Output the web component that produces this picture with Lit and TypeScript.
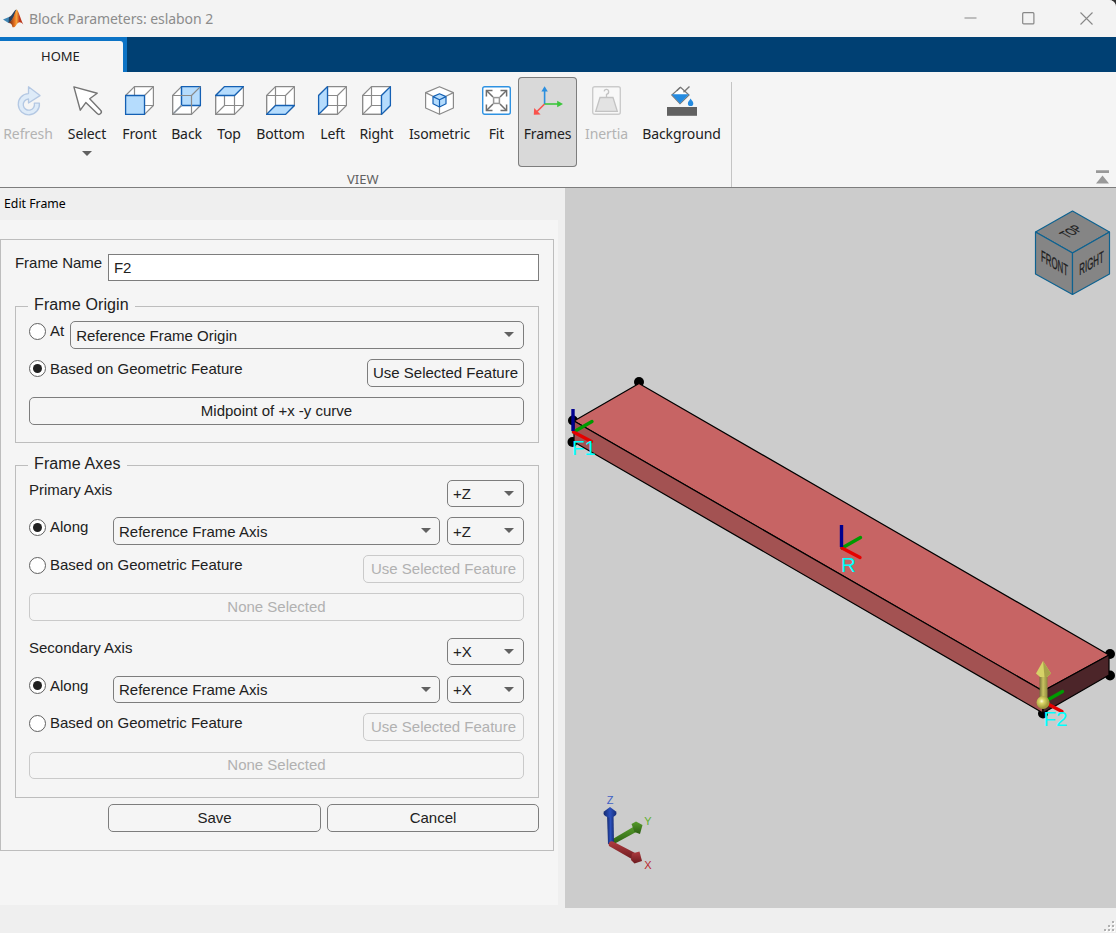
import { LitElement, html, svg, css, nothing } from "lit";
import { customElement, property } from "lit/decorators.js";
import { classMap } from "lit/directives/class-map.js";
import { styleMap } from "lit/directives/style-map.js";

const GRAY = "#8a8a8a";
const BLUE = "#1460b4";
const FILL = "#b5dcfd";

/* Wireframe cube with one highlighted face. */
const cube = (face: string, inFront = true) => {
  const hi = svg`<polygon points=${face} fill=${FILL} stroke=${BLUE} stroke-width="1.3"/>`;
  return svg`
    <g fill="none" stroke=${GRAY} stroke-width="1.2" stroke-linejoin="round">
      <polygon points="0.6,9.5 9.5,0.6 28.4,0.6 28.4,19.5 19.5,28.4 0.6,28.4" fill="#fff"/>
      ${inFront ? nothing : hi}
      <path d="M9.5 0.6V19.5H28.4M9.5 19.5L0.6 28.4" stroke=${inFront ? GRAY : BLUE}/>
      ${inFront ? nothing : svg`<path d="M9.5 19.5L0.6 28.4" stroke="#f5f5f5"/><path d="M9.5 19.5L0.6 28.4"/>`}
      <path d="M0.6 9.5H19.5V28.4M19.5 9.5L28.4 0.6M0.6 9.5V28.4H19.5"/>
      ${inFront ? hi : nothing}
    </g>`;
};

const icons: Record<string, unknown> = {
  refresh: svg`<path d="M14.5 7.6A10.6 10.6 0 1 0 25.4 17.2H20.3A5.6 5.6 0 1 1 14.5 13V17L26 9.6 14.5 0.8Z" fill="#deebf8" stroke="#b4c8e3" stroke-width="1.3" stroke-linejoin="round"/>`,
  select: svg`<path d="M0.9 0.9L24.2 7.2 16.7 12.7 27.6 24.2A2.3 2.3 0 0 1 24.2 27.6L12.8 16.6 7.3 24.2Z" fill="#fff" stroke="#757575" stroke-width="1.4" stroke-linejoin="round"/>`,
  front: cube("0.6,9.5 19.5,9.5 19.5,28.4 0.6,28.4"),
  back: cube("9.5,0.6 28.4,0.6 28.4,19.5 9.5,19.5", false),
  top: cube("0.6,9.5 9.5,0.6 28.4,0.6 19.5,9.5"),
  bottom: cube("0.6,28.4 9.5,19.5 28.4,19.5 19.5,28.4"),
  left: cube("0.6,9.5 9.5,0.6 9.5,19.5 0.6,28.4"),
  right: cube("19.5,9.5 28.4,0.6 28.4,19.5 19.5,28.4"),
  isometric: svg`<g fill="none" stroke-linejoin="round">
      <path d="M14.5 0.7L28.4 6.6V22L14.5 28.3 0.6 22V6.6Z" fill="#fff" stroke=${GRAY} stroke-width="1.2"/>
      <path d="M0.6 6.6L8 10.3M28.4 6.6L21 10.3M14.5 21V28.3" stroke=${GRAY} stroke-width="1.2"/>
      <path d="M14.5 7.8L21 10.6V17.8L14.5 21 8 17.8V10.6Z" fill=${FILL} stroke=${BLUE} stroke-width="1.2"/>
      <path d="M8 10.6L14.5 13.8 21 10.6M14.5 13.8V21" stroke=${BLUE} stroke-width="1.2"/></g>`,
  fit: svg`<rect x="0.7" y="0.7" width="27.6" height="27.6" rx="2" fill="#fff" stroke="#2e92e2" stroke-width="1.4"/>
    <g fill="none" stroke="#6e6e6e" stroke-width="1.5"><rect x="11.6" y="11.6" width="5.8" height="5.8" stroke="#999"/>
    <path d="M11 11L4.5 4.5M18 11L24.5 4.5M11 18L4.5 24.5M18 18L24.5 24.5"/>
    <path d="M4.4 10.5V4.4H10.5M18.5 4.4H24.6V10.5M4.4 18.5V24.6H10.5M18.5 24.6H24.6V18.5"/></g>`,
  frames: svg`<g fill="none" stroke-width="1.6"><path d="M11.6 18L4 25.5" stroke="#f9524c"/><path d="M11.6 18V5" stroke="#2c8fdf"/><path d="M11.6 18H25" stroke="#3cc63c"/></g>
    <path d="M11.6 0.3L14.8 5.6H8.4Z" fill="#2c8fdf"/><path d="M30 18L24.2 14.8V21.2Z" fill="#3cc63c"/><path d="M0.8 28.8L1.2 22 7.6 28.4Z" fill="#f9524c"/>`,
  inertia: svg`<rect x="0.7" y="0.7" width="27.6" height="27.6" rx="2" fill="#f8f8f8" stroke="#cbcbcb" stroke-width="1.4"/>
    <path d="M8 11.5H21L25.3 25.3H3.7Z" fill="#e3e3e3" stroke="#c3c3c3" stroke-width="1.3"/>
    <path d="M14.5 11V8.4C16.600 7.800 16.900 6.600 16.600 5A2.3 2.3 0 0 0 12.100 5.400" fill="none" stroke="#c3c3c3" stroke-width="1.3"/>`,
  background: svg`<rect x="0" y="21" width="30" height="8.8" fill="#616161"/>
    <path d="M13.5 1.3L22 9 13 17.6 4.8 9Z" fill="#fff" stroke="#777" stroke-width="1.2"/>
    <path d="M4.6 8.2H22L13 17.6Z" fill="#258be0"/>
    <path d="M9.8 4.8L13 1.5M16.5 6.300L22.500 0.4" fill="none" stroke="#777" stroke-width="1.4"/>
    <path d="M23.6 12.6C25.300 15.2 26.300 16 26.300 17.4A2.7 2.7 0 0 1 20.9 17.4C20.900 16 22 15.2 23.6 12.6Z" fill="#258be0"/>`,
};

interface Tool { id: string; label: string; width: number; disabled?: boolean; active?: boolean; menu?: boolean; }

const tools: Tool[] = [
  { id: "refresh", label: "Refresh", width: 56, disabled: true },
  { id: "select", label: "Select", width: 62, menu: true },
  { id: "front", label: "Front", width: 43 },
  { id: "back", label: "Back", width: 51 },
  { id: "top", label: "Top", width: 34 },
  { id: "bottom", label: "Bottom", width: 69 },
  { id: "left", label: "Left", width: 35 },
  { id: "right", label: "Right", width: 53 },
  { id: "isometric", label: "Isometric", width: 73 },
  { id: "fit", label: "Fit", width: 41 },
  { id: "frames", label: "Frames", width: 59, active: true },
  { id: "inertia", label: "Inertia", width: 59, disabled: true },
  { id: "background", label: "Background", width: 91 },
];

@customElement("tool-ribbon")
export class ToolRibbon extends LitElement {
  static styles = css`
    :host { display: block; height: 116px; box-sizing: border-box; background: #f5f5f5; border-bottom: 1px solid #7d7d7d; }
    .row { display: flex; height: 115px; }
    .group { width: 731px; display: flex; flex-direction: column; }
    .divider { width: 1px; margin-top: 10px; background: #c4c4c4; }
    .tools { display: flex; padding-top: 5px; }
    .tool { box-sizing: border-box; height: 90px; padding-top: 9px; display: flex; flex-direction: column; align-items: center; border-radius: 4px; font: 14px/20px "Noto Sans", sans-serif; color: #212121; }
    .tool.active { margin-left: 1px; background: #d9d9d9; box-shadow: inset 0 0 0 1px #7d7d7d; }
    .tool.disabled { color: #b3b3b3; }
    .icon { width: 29px; height: 29px; overflow: visible; flex: none; }
    .label { margin-top: 9px; white-space: nowrap; letter-spacing: -0.1px; }
    .caret { margin-top: 7px; border: 5px solid transparent; border-top-color: #616161; border-bottom: 0; }
    .name { padding-left: 347px; margin-top: 2px; font: 13px/20px "Noto Sans", sans-serif; color: #616161; }
    .end { flex: 1; display: flex; justify-content: flex-end; align-items: flex-end; padding: 0 7px 3px 0; }
  `;
  render() {
    return html`<div class="row">
      <div class="group">
        <div class="tools">
          ${tools.map((t) => html`<div class=${classMap({ tool: true, active: !!t.active, disabled: !!t.disabled })} style=${styleMap({ width: `${t.width}px` })}>
            <svg class="icon" viewBox="0 0 29 29">${icons[t.id]}</svg>
            <span class="label">${t.label}</span>
            ${t.menu ? html`<span class="caret"></span>` : nothing}
          </div>`)}
        </div>
        <div class="name">VIEW</div>
      </div>
      <div class="divider"></div>
      <div class="end"><svg width="13" height="14" viewBox="0 0 13 14"><path d="M0 0.3H13V3H0Z M6.5 5.5L13 13.4H0Z" fill="#999"/></svg></div>
    </div>`;
  }
}

@customElement("radio-option")
export class RadioOption extends LitElement {
  @property({ type: Boolean }) checked = false;
  @property({ type: Boolean }) low = false;
  @property() label = "";
  static styles = css`
    :host { display: flex; align-items: center; height: 19px; gap: 4px; white-space: nowrap; }
    .ring { width: 17px; height: 17px; box-sizing: border-box; border: 1px solid #616161; border-radius: 50%; background: #fff; display: flex; align-items: center; justify-content: center; }
    .low { margin-top: 2px; }
    .dot { width: 9px; height: 9px; border-radius: 50%; background: #212121; }
  `;
  render() {
    return html`<span class=${classMap({ ring: true, low: this.low })}>${this.checked ? html`<span class="dot"></span>` : nothing}</span><span>${this.label}</span>`;
  }
}

@customElement("drop-down")
export class DropDown extends LitElement {
  @property() value = "";
  static styles = css`
    :host { display: flex; align-items: center; justify-content: space-between; box-sizing: border-box; border: 1px solid #7d7d7d; border-radius: 5px; padding: 0 9px 0 5px; white-space: nowrap; }
    .caret { border: 5px solid transparent; border-top-color: #616161; border-bottom: 0; margin-top: -1px; }
  `;
  render() {
    return html`<span>${this.value}</span><span class="caret"></span>`;
  }
}

@customElement("frame-form")
export class FrameForm extends LitElement {
  static styles = css`
    :host { display: block; width: 565px; height: 720px; background: #efefef; font: 15px/19px "Liberation Sans", Arial, sans-serif; color: #212121; }
    .title { height: 32px; box-sizing: border-box; padding: 7px 0 0 4px; font: 12.3px/18px "Noto Sans", sans-serif; color: #000; }
    .body { width: 558px; height: 685px; box-sizing: border-box; background: #f5f5f5; padding-top: 19px; }
    .panel { width: 554px; height: 612px; box-sizing: border-box; border: 1px solid #bdbdbd; padding: 14px; }
    .row { display: flex; justify-content: space-between; align-items: flex-start; }
    .name { height: 27px; line-height: 17px; letter-spacing: -0.04px; }
    .input { width: 431px; height: 27px; box-sizing: border-box; border: 1px solid #7d7d7d; background: #fff; padding: 4px 5px; }
    .group { box-sizing: border-box; border: 1px solid #bdbdbd; padding: 0 14px 0 13px; }
    .legend { width: fit-content; height: 20px; line-height: 20px; margin: -12px 0 0 -1px; padding: 0 6px; font-size: 16px; letter-spacing: 0.12px; background: #f5f5f5; white-space: nowrap; }
    .origin { height: 137px; margin-top: 25px; }
    .axes { height: 333px; margin-top: 22px; }
    .rows { padding-top: 6px; display: flex; flex-direction: column; gap: 10px; }
    .h28 { height: 28px; }
    .h27 { height: 27px; }
    .wide { flex: 1; margin-left: 6px; }
    .mid { width: 327px; margin: 0 7px 0 auto; padding-right: 8px; }
    .small { width: 77px; }
    .btn { box-sizing: border-box; border: 1px solid #7d7d7d; border-radius: 5px; display: flex; align-items: center; justify-content: center; padding-bottom: 2px; white-space: nowrap; }
    .off { color: #b1b1b1; border-color: #cacaca; }
    .use { width: 157px; }
    .use.off { width: 161px; }
    .second { padding-top: 7px; }
    .tight { margin-bottom: 1px; }
    .actions { margin: 6px 0 0 93px; gap: 6px; }
    .save { width: 213px; }
    .cancel { width: 212px; }
  `;

  private axis(name: string, dir: string, second: boolean) {
    const h = second ? "h27" : "h28";
    return html`
      <div class="row h27 ${second ? "second tight" : ""}"><span>${name}</span><drop-down class="small h27" .value=${dir}></drop-down></div>
      <div class="row ${h}"><radio-option checked ?low=${!second} label="Along"></radio-option><drop-down class="mid ${h}" value="Reference Frame Axis"></drop-down><drop-down class="small ${h}" .value=${dir}></drop-down></div>
      <div class="row h28 ${second ? "tight" : ""}"><radio-option low label="Based on Geometric Feature"></radio-option><div class="btn off use h28">Use Selected Feature</div></div>
      <div class="btn off ${h}">None Selected</div>`;
  }

  render() {
    return html`
      <div class="title">Edit Frame</div>
      <div class="body"><div class="panel">
        <div class="row name"><span>Frame Name</span><div class="input">F2</div></div>
        <div class="group origin">
          <div class="legend">Frame Origin</div>
          <div class="rows">
            <div class="row h28"><radio-option low label="At"></radio-option><drop-down class="wide h28" value="Reference Frame Origin"></drop-down></div>
            <div class="row h28"><radio-option checked label="Based on Geometric Feature"></radio-option><div class="btn use h28">Use Selected Feature</div></div>
            <div class="btn h28">Midpoint of +x -y curve</div>
          </div>
        </div>
        <div class="group axes">
          <div class="legend">Frame Axes</div>
          <div class="rows">${this.axis("Primary Axis", "+Z", false)}${this.axis("Secondary Axis", "+X", true)}</div>
        </div>
        <div class="row actions"><div class="btn save h28">Save</div><div class="btn cancel h28">Cancel</div></div>
      </div></div>`;
  }
}

@customElement("model-view")
export class ModelView extends LitElement {
  static styles = css`
    :host { display: block; width: 551px; height: 720px; background: #ccc; }
    .scene { display: block; }
    .tag { font: 20.5px "Liberation Sans", sans-serif; fill: #00ffff; }
    .face { font: 16px "Liberation Sans", sans-serif; fill: #1c1c1c; stroke: #1c1c1c; stroke-width: 0.3px; text-anchor: middle; }
    .axis { font: 11px "Liberation Sans", sans-serif; text-anchor: middle; }
  `;

  private triad(x: number, y: number, blue = true) {
    return svg`<g stroke-width="3.4" stroke-linecap="round">
      <path d="M${x} ${y}l18.500 -10.500" stroke="#009a00"/>
      <path d="M${x} ${y}l18 9.500" stroke="#e60000"/>
      ${blue ? svg`<path d="M${x - 0.5} ${y - 1}v-22" stroke="#00008f" stroke-linecap="butt"/>` : nothing}
    </g>`;
  }

  render() {
    return html`<svg class="scene" width="551" height="720" viewBox="565 188 551 720">
      <defs>
        <linearGradient id="gb"><stop offset="0" stop-color="#15296b"/><stop offset=".5" stop-color="#2b50bd"/><stop offset="1" stop-color="#162c76"/></linearGradient>
        <linearGradient id="gg" x2="0" y2="1"><stop offset="0" stop-color="#579d2c"/><stop offset="1" stop-color="#2b5e12"/></linearGradient>
        <linearGradient id="gr" x2="0" y2="1"><stop offset="0" stop-color="#b03c40"/><stop offset="1" stop-color="#6c1a1e"/></linearGradient>
        <linearGradient id="gy"><stop offset="0" stop-color="#77713a"/><stop offset=".45" stop-color="#c9c460"/><stop offset="1" stop-color="#8d883d"/></linearGradient>
        <radialGradient id="ball" cx=".4" cy=".4"><stop offset="0" stop-color="#fdfadc"/><stop offset=".35" stop-color="#dcd768"/><stop offset="1" stop-color="#a39c3d"/></radialGradient>
      </defs>

      <g stroke="#0e6290" stroke-width="1.2" fill="#858585" stroke-linejoin="round">
        <path d="M1072.500 211L1109.500 232 1072.500 253 1035.500 232Z"/>
        <path d="M1035.500 232L1072.500 253V294.500L1035.500 274Z"/>
        <path d="M1109.500 232L1072.500 253V294.500L1109.500 274Z"/>
      </g>
      <text class="face" transform="matrix(.49 .28 0 1 1054.5 268.800)">FRONT</text>
      <text class="face" transform="matrix(.49 -.28 0 1 1091.500 268.500)">RIGHT</text>
      <text class="face" transform="matrix(.49 -.28 .8 .46 1075.500 234)">TOP</text>

      <g>
        <circle cx="639" cy="382" r="5"/><circle cx="573" cy="420.500" r="5"/><circle cx="572.500" cy="442" r="5"/>
        <circle cx="1110" cy="654" r="5"/><circle cx="1110" cy="675.5" r="5"/><circle cx="1043" cy="713.5" r="5"/>
      </g>
      <g stroke="#000" stroke-width="1.2" stroke-linejoin="round">
        <path d="M639 383.500L1109 655 1043 691 574 421Z" fill="#c76464"/>
        <path d="M574 421L1043 691V713L574 442Z" fill="#a35252"/>
        <path d="M1043 691L1109 655V675L1043 713Z" fill="#4c2529"/>
      </g>
      <path d="M1038.5 689a5 5 0 0 1 9 0l-4.500 4z"/>
      ${this.triad(573.5, 432)}
      ${this.triad(842, 548)}
      ${this.triad(1044, 702, false)}
      <text class="tag" x="572" y="454.500">F1</text>
      <text class="tag" x="841" y="571.500">R</text>

      <rect x="1039.500" y="673" width="8" height="28" fill="url(#gy)"/>
      <path d="M1043 661L1051 673.500 1047 677H1040L1036 673.500Z" fill="#d6d267"/>
      <path d="M1043 661L1051 673.500 1047 677H1044.500Z" fill="#a8a34a"/>
      <circle cx="1043" cy="702.500" r="6.500" fill="url(#ball)"/>
      <text class="tag" x="1043.500" y="726">F2</text>

      <path d="M611 840L634 826.500 637 831.500 614 844Z" fill="url(#gg)"/>
      <path d="M631.500 824L636 821.500 642.500 825 640 834 634.500 832Z" fill="url(#gg)"/>
      <path d="M607 814H613.500L614 844H608Z" fill="url(#gb)"/>
      <path d="M610 807L616 811.500C618 815 613.500 817.500 610 817.500S602 815 604 811.500Z" fill="url(#gb)"/>
      <path d="M613 841.500L637 854 633.500 860 609 846A3.200 3.200 0 0 1 613 841.500Z" fill="url(#gr)"/>
      <path d="M632 853.500L639.500 851.500 642 861 634.500 863.500 631 860Z" fill="url(#gr)"/>
      <text class="axis" x="610" y="804" fill="#3f5fc5">Z</text>
      <text class="axis" x="648" y="825" fill="#62b02f">Y</text>
      <text class="axis" x="648" y="868.500" fill="#b9292c">X</text>
    </svg>`;
  }
}

@customElement("app-root")
export class AppRoot extends LitElement {
  static styles = css`
    :host { display: block; width: 1116px; height: 933px; overflow: hidden; background: #333; }
    .window { height: 933px; background: #efefef; border-top-right-radius: 7px; overflow: hidden; display: flex; flex-direction: column; }
    .titlebar { height: 37px; box-sizing: border-box; display: flex; align-items: center; background: #f3f3f3; padding: 0 23px 0 3px; flex: none; }
    .caption { margin-left: 5px; flex: 1; font: 14px/20px "Noto Sans", sans-serif; letter-spacing: -0.07px; color: #8c8c8c; }
    .controls { display: flex; gap: 45px; padding-bottom: 1px; }
    .tabs { height: 35px; background: #004073; flex: none; }
    .tab { width: 127px; height: 35px; box-sizing: border-box; background: #0c73c5; padding: 4px 4px 0 0; }
    .face { height: 31px; background: #f5f5f5; border-top-right-radius: 3px; padding-left: 41px; font: 13px/31px "Noto Sans", sans-serif; color: #212121; }
    .main { display: flex; height: 720px; flex: none; }
    .status { flex: 1; display: flex; justify-content: flex-end; align-items: flex-end; }
  `;
  render() {
    const grip = [[9, 0], [5, 4], [9, 4], [1, 8], [5, 8], [9, 8]];
    return html`<div class="window">
      <div class="titlebar">
        <svg width="21" height="20" viewBox="0 0 21 20">
          <defs><linearGradient id="m" x2="1"><stop offset="0" stop-color="#571a12"/><stop offset=".4" stop-color="#e5701f"/><stop offset=".55" stop-color="#f5a53c"/><stop offset=".75" stop-color="#c2381a"/><stop offset="1" stop-color="#b0331c"/></linearGradient></defs>
          <path d="M0 10.500L6 8 9.500 10.500 5.500 14Z" fill="#3f86b5"/>
          <path d="M6 8C9 7.500 10.500 1.500 13.500 0.500L11 8 7.500 13 5.500 14Z" fill="#27415f"/>
          <path d="M13.500 0.500C15.500 1 17.500 10 20.300 15.500C17.500 12.500 15.500 12.500 13 16.500C12 18 11 18.500 9.500 18.300C9 15.500 8 14 5.500 14C10.500 11.500 11.500 3 13.500 0.500Z" fill="url(#m)"/>
        </svg>
        <span class="caption">Block Parameters: eslabon 2</span>
        <div class="controls">
          <svg width="13" height="13" viewBox="0 0 13 13"><path d="M0.500 6H12.500" stroke="#878787" fill="none"/></svg>
          <svg width="13" height="13" viewBox="0 0 13 13"><rect x="0.700" y="0.700" width="11.200" height="11.200" rx="1" stroke="#878787" stroke-width="1.200" fill="none"/></svg>
          <svg width="13" height="13" viewBox="0 0 13 13"><path d="M0.500 0.500L12.500 12.500M12.500 0.500L0.500 12.500" stroke="#878787" stroke-width="1.100" fill="none"/></svg>
        </div>
      </div>
      <div class="tabs"><div class="tab"><div class="face">HOME</div></div></div>
      <tool-ribbon></tool-ribbon>
      <div class="main"><frame-form></frame-form><model-view></model-view></div>
      <div class="status"><svg width="13" height="12" viewBox="0 0 13 12">${grip.map(([x, y]) => svg`<rect x=${x + 1} y=${y + 1} width="2" height="2" fill="#fff"/><rect x=${x} y=${y} width="2" height="2" fill="#b0b0b0"/>`)}</svg></div>
    </div>`;
  }
}
